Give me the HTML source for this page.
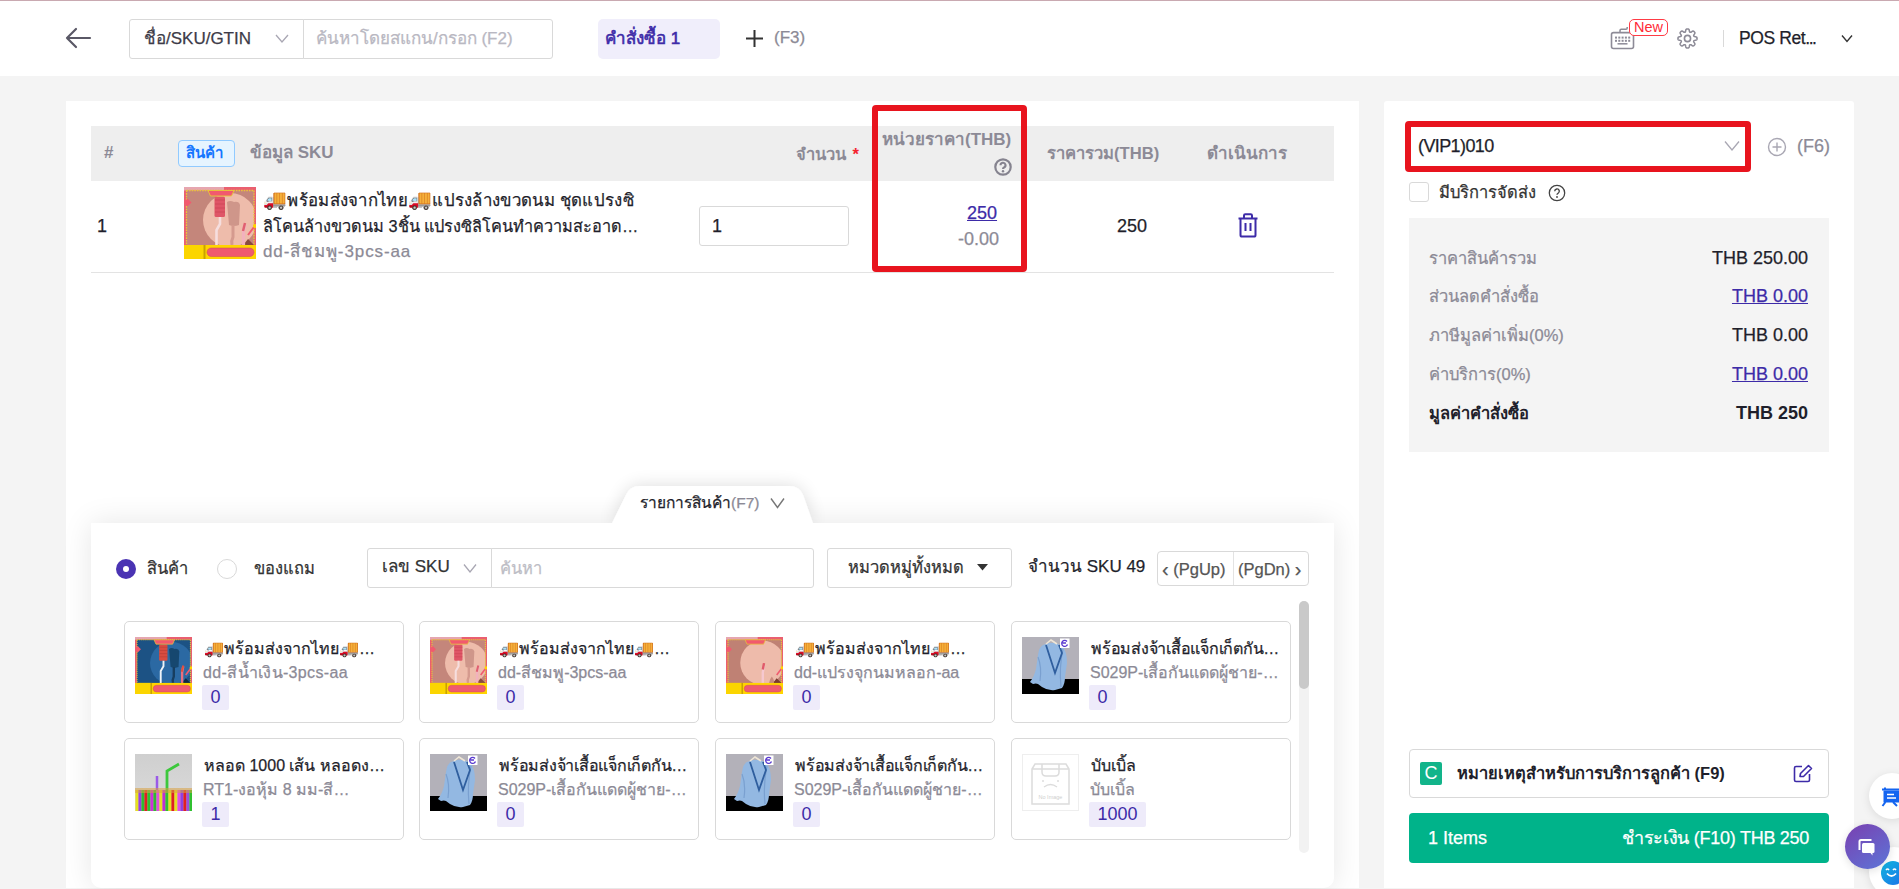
<!DOCTYPE html>
<html><head><meta charset="utf-8">
<style>
*{box-sizing:border-box;margin:0;padding:0}
html,body{width:1899px;height:889px;overflow:hidden;background:#f4f4f4;font-family:"Liberation Sans",sans-serif;color:#1f1f2b}
.a{position:absolute}
.t{position:absolute;white-space:nowrap;line-height:20px;height:20px;-webkit-text-stroke:0.25px currentColor}
.hdr{left:0;top:0;width:1899px;height:76px;background:#fff;border-top:1px solid #c9a9b1}
.card{background:#fff}
.t[style*="bold"]{-webkit-text-stroke:0}
.gray{color:#8c8a96}
.purple{color:#3d2ba8}
.box{border:1px solid #d9d9d9;border-radius:3px;background:#fff}
</style></head><body>

<!-- HEADER -->
<div class="a hdr"></div>
<svg class="a" style="left:64px;top:27px" width="28" height="22" viewBox="0 0 28 22"><path d="M12 2 L3 11 L12 20 M3 11 H26" fill="none" stroke="#5a5866" stroke-width="2.2" stroke-linecap="round" stroke-linejoin="round"/></svg>
<div class="a box" style="left:129px;top:19px;width:175px;height:40px;border-radius:3px 0 0 3px"></div>
<div class="t" style="left:144px;top:29px;font-size:17px;color:#3d3b48">ชื่อ/SKU/GTIN</div>
<svg class="a" style="left:275px;top:34px" width="14" height="9" viewBox="0 0 14 9"><path d="M1 1 L7 8 L13 1" fill="none" stroke="#a9a7b3" stroke-width="1.3"/></svg>
<div class="a box" style="left:303px;top:19px;width:250px;height:40px;border-radius:0 3px 3px 0"></div>
<div class="t" style="left:316px;top:29px;font-size:17px;color:#b9b8c2">ค้นหาโดยสแกน/กรอก (F2)</div>
<div class="a" style="left:598px;top:19px;width:122px;height:40px;background:#f0eefb;border-radius:5px"></div>
<div class="t" style="left:605px;top:29px;font-size:17px;color:#3d2ba8;-webkit-text-stroke:0.6px #3d2ba8">คำสั่งซื้อ 1</div>
<svg class="a" style="left:745px;top:29px" width="19" height="19" viewBox="0 0 19 19"><path d="M9.5 1 V18 M1 9.5 H18" stroke="#333" stroke-width="2"/></svg>
<div class="t" style="left:774px;top:28px;font-size:17px;color:#8c8a96">(F3)</div>

<!-- keyboard icon -->
<svg class="a" style="left:1608px;top:24px" width="30" height="28" viewBox="0 0 30 28"><rect x="3.5" y="8.6" width="22" height="15.9" rx="2" fill="none" stroke="#8d8b97" stroke-width="1.6"/><g fill="#8d8b97"><rect x="7" y="12.6" width="2" height="2"/><rect x="10.3" y="12.6" width="2" height="2"/><rect x="13.6" y="12.6" width="2" height="2"/><rect x="16.9" y="12.6" width="2" height="2"/><rect x="20.2" y="12.6" width="2" height="2"/><rect x="7" y="15.8" width="2" height="2"/><rect x="10.3" y="15.8" width="2" height="2"/><rect x="13.6" y="15.8" width="2" height="2"/><rect x="16.9" y="15.8" width="2" height="2"/><rect x="20.2" y="15.8" width="2" height="2"/></g><path d="M9.5 19.8 H19.5" stroke="#8d8b97" stroke-width="1.5"/><path d="M12 8.6 V6.5 Q12 5.3 13.2 5.3 H18 Q19.2 5.3 19.2 4 V3" fill="none" stroke="#8d8b97" stroke-width="1.5"/></svg>
<div class="a" style="left:1629px;top:19px;width:39px;height:17px;border:1.2px solid #ff3b45;border-radius:5px;background:#fff;color:#ff2a36;font-size:14.5px;line-height:15px;text-align:center">New</div>
<svg class="a" style="left:1676px;top:27px" width="23" height="23" viewBox="0 0 24 24"><path fill="none" stroke="#8d8b97" stroke-width="1.6" stroke-linejoin="round" d="M12.00 2.03 L12.26 2.04 L12.52 2.06 L12.78 2.11 L13.03 2.19 L13.27 2.33 L13.50 2.56 L13.68 2.92 L13.82 3.42 L13.93 3.98 L14.01 4.48 L14.12 4.86 L14.24 5.12 L14.38 5.29 L14.53 5.41 L14.70 5.49 L14.87 5.55 L15.07 5.57 L15.29 5.55 L15.55 5.46 L15.89 5.26 L16.31 4.97 L16.78 4.64 L17.23 4.39 L17.62 4.26 L17.94 4.26 L18.21 4.33 L18.44 4.46 L18.66 4.61 L18.86 4.77 L19.05 4.95 L19.23 5.14 L19.39 5.34 L19.54 5.56 L19.67 5.79 L19.74 6.06 L19.74 6.38 L19.61 6.77 L19.36 7.22 L19.03 7.69 L18.74 8.11 L18.54 8.45 L18.45 8.71 L18.43 8.93 L18.45 9.13 L18.51 9.30 L18.59 9.47 L18.71 9.62 L18.88 9.76 L19.14 9.88 L19.52 9.99 L20.02 10.07 L20.58 10.18 L21.08 10.32 L21.44 10.50 L21.67 10.73 L21.81 10.97 L21.89 11.22 L21.94 11.48 L21.96 11.74 L21.97 12.00 L21.96 12.26 L21.94 12.52 L21.89 12.78 L21.81 13.03 L21.67 13.27 L21.44 13.50 L21.08 13.68 L20.58 13.82 L20.02 13.93 L19.52 14.01 L19.14 14.12 L18.88 14.24 L18.71 14.38 L18.59 14.53 L18.51 14.70 L18.45 14.87 L18.43 15.07 L18.45 15.29 L18.54 15.55 L18.74 15.89 L19.03 16.31 L19.36 16.78 L19.61 17.23 L19.74 17.62 L19.74 17.94 L19.67 18.21 L19.54 18.44 L19.39 18.66 L19.23 18.86 L19.05 19.05 L18.86 19.23 L18.66 19.39 L18.44 19.54 L18.21 19.67 L17.94 19.74 L17.62 19.74 L17.23 19.61 L16.78 19.36 L16.31 19.03 L15.89 18.74 L15.55 18.54 L15.29 18.45 L15.07 18.43 L14.87 18.45 L14.70 18.51 L14.53 18.59 L14.38 18.71 L14.24 18.88 L14.12 19.14 L14.01 19.52 L13.93 20.02 L13.82 20.58 L13.68 21.08 L13.50 21.44 L13.27 21.67 L13.03 21.81 L12.78 21.89 L12.52 21.94 L12.26 21.96 L12.00 21.97 L11.74 21.96 L11.48 21.94 L11.22 21.89 L10.97 21.81 L10.73 21.67 L10.50 21.44 L10.32 21.08 L10.18 20.58 L10.07 20.02 L9.99 19.52 L9.88 19.14 L9.76 18.88 L9.62 18.71 L9.47 18.59 L9.30 18.51 L9.13 18.45 L8.93 18.43 L8.71 18.45 L8.45 18.54 L8.11 18.74 L7.69 19.03 L7.22 19.36 L6.77 19.61 L6.38 19.74 L6.06 19.74 L5.79 19.67 L5.56 19.54 L5.34 19.39 L5.14 19.23 L4.95 19.05 L4.77 18.86 L4.61 18.66 L4.46 18.44 L4.33 18.21 L4.26 17.94 L4.26 17.62 L4.39 17.23 L4.64 16.78 L4.97 16.31 L5.26 15.89 L5.46 15.55 L5.55 15.29 L5.57 15.07 L5.55 14.87 L5.49 14.70 L5.41 14.53 L5.29 14.38 L5.12 14.24 L4.86 14.12 L4.48 14.01 L3.98 13.93 L3.42 13.82 L2.92 13.68 L2.56 13.50 L2.33 13.27 L2.19 13.03 L2.11 12.78 L2.06 12.52 L2.04 12.26 L2.03 12.00 L2.04 11.74 L2.06 11.48 L2.11 11.22 L2.19 10.97 L2.33 10.73 L2.56 10.50 L2.92 10.32 L3.42 10.18 L3.98 10.07 L4.48 9.99 L4.86 9.88 L5.12 9.76 L5.29 9.62 L5.41 9.47 L5.49 9.30 L5.55 9.13 L5.57 8.93 L5.55 8.71 L5.46 8.45 L5.26 8.11 L4.97 7.69 L4.64 7.22 L4.39 6.77 L4.26 6.38 L4.26 6.06 L4.33 5.79 L4.46 5.56 L4.61 5.34 L4.77 5.14 L4.95 4.95 L5.14 4.77 L5.34 4.61 L5.56 4.46 L5.79 4.33 L6.06 4.26 L6.38 4.26 L6.77 4.39 L7.22 4.64 L7.69 4.97 L8.11 5.26 L8.45 5.46 L8.71 5.55 L8.93 5.57 L9.13 5.55 L9.30 5.49 L9.47 5.41 L9.62 5.29 L9.76 5.12 L9.88 4.86 L9.99 4.48 L10.07 3.98 L10.18 3.42 L10.32 2.92 L10.50 2.56 L10.73 2.33 L10.97 2.19 L11.22 2.11 L11.48 2.06 L11.74 2.04Z"/><circle cx="12" cy="12" r="3.2" fill="none" stroke="#8d8b97" stroke-width="1.7"/></svg>
<div class="a" style="left:1723px;top:30px;width:1px;height:17px;background:#d9d9d9"></div>
<div class="t" style="left:1739px;top:28px;font-size:17.5px;color:#1f1f2b;letter-spacing:-0.4px">POS Ret<span style="letter-spacing:-1.5px">...</span></div>
<svg class="a" style="left:1841px;top:34px" width="12" height="9" viewBox="0 0 12 9"><path d="M1 1.5 L6 7.5 L11 1.5" fill="none" stroke="#333" stroke-width="1.4"/></svg>

<!-- LEFT CARD -->
<div class="a card" style="left:66px;top:101px;width:1293px;height:787px"></div>
<div class="a" style="left:91px;top:126px;width:1243px;height:55px;background:#eeeeee"></div>
<div class="t gray" style="left:104px;top:143px;font-size:17px;font-weight:bold">#</div>
<div class="a" style="left:178px;top:140px;width:57px;height:27px;background:#e6f4ff;border:1px solid #91caff;border-radius:4px"></div>
<div class="t" style="left:186px;top:143px;font-size:15px;color:#1677ff;font-weight:bold">สินค้า</div>
<div class="t gray" style="left:250px;top:143px;font-size:17px;font-weight:bold">ข้อมูล SKU</div>
<div class="t gray" style="left:796px;top:144px;font-size:16.5px;font-weight:bold">จำนวน <span style="color:#f5222d;margin-left:2px">*</span></div>
<div class="t gray" style="left:882px;top:130px;font-size:17px;font-weight:bold">หน่วยราคา(THB)</div>
<svg class="a" style="left:994px;top:158px" width="18" height="18" viewBox="0 0 18 18"><circle cx="9" cy="9" r="7.7" fill="none" stroke="#85838f" stroke-width="2.2"/><path d="M6.5 7.3a2.5 2.5 0 1 1 3.5 2.2c-.7.3-1 .8-1 1.6" fill="none" stroke="#85838f" stroke-width="2.1"/><circle cx="9" cy="13.3" r="1.2" fill="#85838f"/></svg>
<div class="t gray" style="left:1047px;top:144px;font-size:16.6px;font-weight:bold">ราคารวม(THB)</div>
<div class="t gray" style="left:1207px;top:144px;font-size:17px;font-weight:bold">ดำเนินการ</div>

<!-- row -->
<div class="t" style="left:97px;top:216px;font-size:18px">1</div>
<div id="img0" class="a" style="left:184px;top:187px;width:72px;height:72px;overflow:hidden"><svg width="72" height="72" viewBox="0 0 72 72"><defs><clipPath id="cr"><rect x="2.5" y="3.5" width="67.5" height="55.5"/></clipPath></defs><rect width="72" height="72" fill="#ea5f70"/><rect x="0" y="0" width="40" height="3.5" fill="#e6a6b0"/><rect x="2.5" y="3.5" width="67.5" height="55.5" fill="#c4867b"/><g clip-path="url(#cr)"><circle cx="46" cy="33" r="27" fill="#eebcab"/><path d="M64 52 L72 60 V60 H58 Z" fill="#8a4a40"/><path d="M43 15 Q46 13 50 15 Q55 14 56 18 L55 38 Q50 40 45 38 Z" fill="#cf968a"/><path d="M49 38 V50 Q47 54 48 58" stroke="#d59a8e" stroke-width="3" fill="none"/><rect x="30.5" y="9.5" width="10.5" height="20.5" rx="1.5" fill="#df5667"/><path d="M31 13 H41 M31 17 H41 M31 21 H41 M31 25 H41" stroke="#c84050" stroke-width=".6"/><path d="M36 30 V37 L32.5 43 V59" stroke="#f6dede" stroke-width="2.6" fill="none"/><path d="M61 37 L59.5 45 V59" stroke="#f2b2bd" stroke-width="3.2" fill="none"/><path d="M61 36 L59 44" stroke="#e06070" stroke-width="2.5"/></g><rect x="2.5" y="3.5" width="67.5" height="55.5" fill="none" stroke="#e8c838" stroke-width="1.3" stroke-dasharray="1.6 1"/><path d="M24 3.5 H50 L47.5 9 H26.5 Z" fill="#f15a6e" stroke="#e8c838" stroke-width=".9"/><path d="M3.5 11.5 L7.5 15.5 L3.5 19.5 L-0.5 15.5 Z" fill="#f15a6e"/><rect x="0" y="58" width="72" height="14" fill="#ffd400"/><rect x="0" y="58" width="19.5" height="14" fill="#fbd500"/><rect x="19.5" y="58" width="2" height="14" fill="#c9a300"/><rect x="23" y="61" width="47" height="8.5" rx="4.2" fill="#f05a6e" stroke="#c94a5a" stroke-width=".5"/><path d="M70 40 L64 48" stroke="#f05a6e" stroke-width="2"/><circle cx="71" cy="39" r="2" fill="#ffd400"/></svg></div><!--/img0-->
<div class="t" style="left:263px;top:190px;font-size:16.8px;letter-spacing:0.3px"><span style="font-size:19px">🚚</span>พร้อมส่งจากไทย<span style="font-size:19px">🚚</span>แปรงล้างขวดนม ชุดแปรงซิ</div>
<div class="t" style="left:263px;top:216px;font-size:16.3px">ลิโคนล้างขวดนม 3ชิ้น แปรงซิลิโคนทำความสะอาด…</div>
<div class="t gray" style="left:263px;top:242px;font-size:17px;letter-spacing:0.9px">dd-สีชมพู-3pcs-aa</div>
<div class="a box" style="left:699px;top:206px;width:150px;height:40px"></div>
<div class="t" style="left:712px;top:216px;font-size:18px">1</div>
<div class="t purple" style="left:967px;top:203px;font-size:18px;text-decoration:underline">250</div>
<div class="t gray" style="left:900px;width:99px;text-align:right;top:229px;font-size:18px">-0.00</div>
<div class="t" style="left:1117px;top:216px;font-size:18px">250</div>
<svg class="a" style="left:1237px;top:213px" width="22" height="25" viewBox="0 0 22 25"><path d="M1.5 5.5 H20.5 M7 5.5 V2.5 Q7 1.2 8.3 1.2 H13.7 Q15 1.2 15 2.5 V5.5 M3.5 5.5 V22 Q3.5 23.6 5 23.6 H17 Q18.5 23.6 18.5 22 V5.5 M8.5 10 V18 M13.5 10 V18" fill="none" stroke="#3d2ba8" stroke-width="2"/></svg>
<div class="a" style="left:91px;top:272px;width:1243px;height:1px;background:#e3e3e3"></div>

<!-- red highlight -->
<div class="a" style="left:872px;top:105px;width:155px;height:167px;border:6px solid #e8141e;border-radius:4px"></div>

<!-- BOTTOM PANEL -->
<div id="panel" class="a" style="left:91px;top:523px;width:1243px;height:365px;background:#fff;box-shadow:0 0 30px rgba(0,0,0,0.10);border-radius:0 0 10px 10px"></div>
<svg class="a" style="left:590px;top:470px" width="245" height="60" viewBox="0 0 245 60"><defs><filter id="sh" x="-20%" y="-50%" width="140%" height="200%"><feGaussianBlur in="SourceAlpha" stdDeviation="9"/><feComponentTransfer><feFuncA type="linear" slope="0.14"/></feComponentTransfer><feMerge><feMergeNode/><feMergeNode in="SourceGraphic"/></feMerge></filter></defs><path d="M22 53 L36 25 Q40 16 50 16 H199 Q209 16 213 25 L223 53 Z" fill="#fff" filter="url(#sh)"/></svg>
<div class="a" style="left:91px;top:523px;width:1243px;height:20px;background:#fff"></div>
<div class="t" style="left:640px;top:493px;font-size:15.5px">รายการสินค้า<span style="color:#8c8a96">(F7)</span></div>
<svg class="a" style="left:770px;top:497px" width="15" height="12" viewBox="0 0 15 12"><path d="M1 1.5 L7.5 10.5 L14 1.5" fill="none" stroke="#777" stroke-width="1.4"/></svg>

<div class="a" style="left:116px;top:559px;width:20px;height:20px;border-radius:50%;background:#4a33b3"></div>
<div class="a" style="left:123px;top:566px;width:6px;height:6px;border-radius:50%;background:#fff"></div>
<div class="t" style="left:147px;top:558px;font-size:16.5px;color:#333">สินค้า</div>
<div class="a" style="left:217px;top:559px;width:20px;height:20px;border-radius:50%;border:1px solid #d9d9d9;background:#fff"></div>
<div class="t" style="left:254px;top:558px;font-size:16.5px;color:#333">ของแถม</div>

<div class="a box" style="left:367px;top:548px;width:125px;height:40px;border-radius:3px 0 0 3px"></div>
<div class="t" style="left:382px;top:557px;font-size:17px;color:#333">เลข SKU</div>
<svg class="a" style="left:463px;top:563px" width="14" height="10" viewBox="0 0 14 10"><path d="M1 1.5 L7 9 L13 1.5" fill="none" stroke="#a9a7b3" stroke-width="1.3"/></svg>
<div class="a box" style="left:491px;top:548px;width:323px;height:40px;border-radius:0 3px 3px 0"></div>
<div class="t" style="left:500px;top:558px;font-size:16.5px;color:#bdbdc5">ค้นหา</div>
<div class="a box" style="left:827px;top:548px;width:185px;height:40px"></div>
<div class="t" style="left:848px;top:557px;font-size:16.5px;color:#333">หมวดหมู่ทั้งหมด</div>
<svg class="a" style="left:977px;top:564px" width="11" height="7" viewBox="0 0 11 7"><path d="M0 0 H11 L5.5 6.5 Z" fill="#333"/></svg>
<div class="t" style="left:1028px;top:557px;font-size:17px;color:#1f1f2b">จำนวน SKU 49</div>
<div class="a box" style="left:1157px;top:551px;width:152px;height:35px;border-radius:4px"></div>
<div class="a" style="left:1233px;top:552px;width:1px;height:33px;background:#e3e3e3"></div>
<div class="t" style="left:1162px;top:558px;font-size:16.5px;color:#555"><span style="font-size:20px;position:relative;top:1px">‹</span> (PgUp)</div>
<div class="t" style="left:1238px;top:558px;font-size:16.5px;color:#555">(PgDn) <span style="font-size:20px;position:relative;top:1px">›</span></div>

<!-- scrollbar -->
<div class="a" style="left:1299px;top:601px;width:10px;height:252px;background:#f2f2f2;border-radius:5px"></div>
<div class="a" style="left:1299px;top:601px;width:10px;height:88px;background:#c9c9c9;border-radius:5px"></div>

<div id="cards"></div>
<div class="a box" style="left:124px;top:621px;width:280px;height:102px;border-radius:5px"></div>
<div class="a" style="left:135px;top:637px;width:57px;height:57px"><svg width="57" height="57" viewBox="0 0 72 72"><defs><clipPath id="c0"><rect x="2.5" y="3.5" width="67.5" height="55.5"/></clipPath></defs><rect width="72" height="72" fill="#ea5f70"/><rect x="0" y="0" width="40" height="3.5" fill="#e6a6b0"/><rect x="2.5" y="3.5" width="67.5" height="55.5" fill="#1c5284"/><g clip-path="url(#c0)"><circle cx="46" cy="33" r="27" fill="#2b69a3"/><path d="M64 52 L72 60 V60 H58 Z" fill="#0e2a44"/><path d="M43 15 Q46 13 50 15 Q55 14 56 18 L55 38 Q50 40 45 38 Z" fill="#16476f"/><path d="M49 38 V50 Q47 54 48 58" stroke="#173e60" stroke-width="3" fill="none"/><rect x="30.5" y="9.5" width="10.5" height="20.5" rx="1.5" fill="#d94c40"/><path d="M31 13 H41 M31 17 H41 M31 21 H41 M31 25 H41" stroke="#b03a30" stroke-width=".6"/><path d="M36 30 V37 L32.5 43 V59" stroke="#eef3f8" stroke-width="2.4" fill="none"/><path d="M61 37 L59.5 45 V59" stroke="#e87080" stroke-width="3" fill="none"/><path d="M61 36 L59 44" stroke="#e05040" stroke-width="2.5"/></g><rect x="2.5" y="3.5" width="67.5" height="55.5" fill="none" stroke="#e8c838" stroke-width="1.3" stroke-dasharray="1.6 1"/><path d="M24 3.5 H50 L47.5 9 H26.5 Z" fill="#f15a6e" stroke="#e8c838" stroke-width=".9"/><path d="M3.5 11.5 L7.5 15.5 L3.5 19.5 L-0.5 15.5 Z" fill="#f15a6e"/><rect x="0" y="58" width="72" height="14" fill="#ffd400"/><rect x="0" y="58" width="19.5" height="14" fill="#fbd500"/><rect x="19.5" y="58" width="2" height="14" fill="#c9a300"/><rect x="23" y="61" width="47" height="8.5" rx="4.2" fill="#f05a6e" stroke="#c94a5a" stroke-width=".5"/><path d="M70 40 L64 48" stroke="#f05a6e" stroke-width="2"/><circle cx="71" cy="39" r="2" fill="#ffd400"/></svg></div>
<div class="t" style="left:204px;top:639px;font-size:16px">🚚พร้อมส่งจากไทย🚚…</div>
<div class="t gray" style="left:203px;top:663px;font-size:16px;letter-spacing:0.35px">dd-สีน้ำเงิน-3pcs-aa</div>
<div class="a" style="left:202px;top:685px;width:27px;height:25px;background:#eeebfa;border-radius:2px;color:#3d2ba8;font-size:18px;line-height:25px;text-align:center">0</div>
<div class="a box" style="left:419px;top:621px;width:280px;height:102px;border-radius:5px"></div>
<div class="a" style="left:430px;top:637px;width:57px;height:57px"><svg width="57" height="57" viewBox="0 0 72 72"><defs><clipPath id="c1"><rect x="2.5" y="3.5" width="67.5" height="55.5"/></clipPath></defs><rect width="72" height="72" fill="#ea5f70"/><rect x="0" y="0" width="40" height="3.5" fill="#e6a6b0"/><rect x="2.5" y="3.5" width="67.5" height="55.5" fill="#c4867b"/><g clip-path="url(#c1)"><circle cx="46" cy="33" r="27" fill="#eebcab"/><path d="M64 52 L72 60 V60 H58 Z" fill="#8a4a40"/><path d="M43 15 Q46 13 50 15 Q55 14 56 18 L55 38 Q50 40 45 38 Z" fill="#cf968a"/><path d="M49 38 V50 Q47 54 48 58" stroke="#d59a8e" stroke-width="3" fill="none"/><rect x="30.5" y="9.5" width="10.5" height="20.5" rx="1.5" fill="#df5667"/><path d="M31 13 H41 M31 17 H41 M31 21 H41 M31 25 H41" stroke="#c84050" stroke-width=".6"/><path d="M36 30 V37 L32.5 43 V59" stroke="#f6dede" stroke-width="2.6" fill="none"/><path d="M61 37 L59.5 45 V59" stroke="#f2b2bd" stroke-width="3.2" fill="none"/><path d="M61 36 L59 44" stroke="#e06070" stroke-width="2.5"/></g><rect x="2.5" y="3.5" width="67.5" height="55.5" fill="none" stroke="#e8c838" stroke-width="1.3" stroke-dasharray="1.6 1"/><path d="M24 3.5 H50 L47.5 9 H26.5 Z" fill="#f15a6e" stroke="#e8c838" stroke-width=".9"/><path d="M3.5 11.5 L7.5 15.5 L3.5 19.5 L-0.5 15.5 Z" fill="#f15a6e"/><rect x="0" y="58" width="72" height="14" fill="#ffd400"/><rect x="0" y="58" width="19.5" height="14" fill="#fbd500"/><rect x="19.5" y="58" width="2" height="14" fill="#c9a300"/><rect x="23" y="61" width="47" height="8.5" rx="4.2" fill="#f05a6e" stroke="#c94a5a" stroke-width=".5"/><path d="M70 40 L64 48" stroke="#f05a6e" stroke-width="2"/><circle cx="71" cy="39" r="2" fill="#ffd400"/></svg></div>
<div class="t" style="left:499px;top:639px;font-size:16px">🚚พร้อมส่งจากไทย🚚…</div>
<div class="t gray" style="left:498px;top:663px;font-size:16px">dd-สีชมพู-3pcs-aa</div>
<div class="a" style="left:497px;top:685px;width:27px;height:25px;background:#eeebfa;border-radius:2px;color:#3d2ba8;font-size:18px;line-height:25px;text-align:center">0</div>
<div class="a box" style="left:715px;top:621px;width:280px;height:102px;border-radius:5px"></div>
<div class="a" style="left:726px;top:637px;width:57px;height:57px"><svg width="57" height="57" viewBox="0 0 72 72"><defs><clipPath id="c2"><rect x="2.5" y="3.5" width="67.5" height="55.5"/></clipPath></defs><rect width="72" height="72" fill="#ea5f70"/><rect x="0" y="0" width="40" height="3.5" fill="#e6a6b0"/><rect x="2.5" y="3.5" width="67.5" height="55.5" fill="#bf8174"/><g clip-path="url(#c2)"><circle cx="46" cy="32.5" r="28" fill="#eebbab"/><path d="M64 52 L72 60 V60 H58 Z" fill="#7a3a30"/><path d="M48 36 L46.5 45 V59" stroke="#f6c8d0" stroke-width="3" fill="none"/><path d="M48 33 L46.5 41" stroke="#e05a6a" stroke-width="3"/><path d="M58 50 Q62 56 60 59 H54 Q55 53 58 50 Z" fill="#c98a7c"/></g><rect x="2.5" y="3.5" width="67.5" height="55.5" fill="none" stroke="#e8c838" stroke-width="1.3" stroke-dasharray="1.6 1"/><path d="M24 3.5 H50 L47.5 9 H26.5 Z" fill="#f15a6e" stroke="#e8c838" stroke-width=".9"/><path d="M3.5 11.5 L7.5 15.5 L3.5 19.5 L-0.5 15.5 Z" fill="#f15a6e"/><rect x="0" y="58" width="72" height="14" fill="#ffd400"/><rect x="0" y="58" width="19.5" height="14" fill="#fbd500"/><rect x="19.5" y="58" width="2" height="14" fill="#c9a300"/><rect x="23" y="61" width="47" height="8.5" rx="4.2" fill="#f05a6e" stroke="#c94a5a" stroke-width=".5"/><path d="M70 40 L64 48" stroke="#f05a6e" stroke-width="2"/><circle cx="71" cy="39" r="2" fill="#ffd400"/></svg></div>
<div class="t" style="left:795px;top:639px;font-size:16px">🚚พร้อมส่งจากไทย🚚…</div>
<div class="t gray" style="left:794px;top:663px;font-size:16px">dd-แปรงจุกนมหลอก-aa</div>
<div class="a" style="left:793px;top:685px;width:27px;height:25px;background:#eeebfa;border-radius:2px;color:#3d2ba8;font-size:18px;line-height:25px;text-align:center">0</div>
<div class="a box" style="left:1011px;top:621px;width:280px;height:102px;border-radius:5px"></div>
<div class="a" style="left:1022px;top:637px;width:57px;height:57px"><svg width="57" height="57" viewBox="0 0 57 57"><rect width="57" height="57" fill="#b3b1b9"/><rect y="42" width="57" height="15" fill="#000"/><path d="M21 8 Q17 10 16 18 L14 32 Q12 40 8 45 L11 47 Q14 46 16 47 L20 50 Q26 54 33 53 L40 51 Q43 47 43 40 L45 26 Q45 14 40 9 L34 6 L27 6 Z" fill="#93b8e2"/><path d="M16 20 Q20 30 18 44 M41 12 Q37 30 39 50" stroke="#7aa0d0" stroke-width="1.2" fill="none"/><path d="M24 8 L33 36 L40 16 L37 8" stroke="#2f5e9e" stroke-width="1.8" fill="none"/><path d="M24 7 L29 3 L35 7" stroke="#efe6d6" stroke-width="1.6" fill="none"/><rect x="38" y="1.5" width="9.5" height="9.5" fill="#fff"/><path d="M45 4.5 A3 3 0 1 0 45.5 7.5 M40.5 6 H44" stroke="#5a3ad0" stroke-width="1.3" fill="none"/></svg></div>
<div class="t" style="left:1091px;top:639px;font-size:16px;letter-spacing:-0.25px">พร้อมส่งจ้าเสื้อแจ็กเก็ตกัน…</div>
<div class="t gray" style="left:1090px;top:663px;font-size:16px">S029P-เสื้อกันแดดผู้ชาย-…</div>
<div class="a" style="left:1089px;top:685px;width:27px;height:25px;background:#eeebfa;border-radius:2px;color:#3d2ba8;font-size:18px;line-height:25px;text-align:center">0</div>
<div class="a box" style="left:124px;top:738px;width:280px;height:102px;border-radius:5px"></div>
<div class="a" style="left:135px;top:754px;width:57px;height:57px"><svg width="57" height="57" viewBox="0 0 57 57"><defs><linearGradient id="sg" x1="0" y1="0" x2="0" y2="1"><stop offset="0" stop-color="#cfcfcf"/><stop offset="1" stop-color="#dcdcdc"/></linearGradient></defs><rect width="57" height="57" fill="url(#sg)"/><path d="M22 22 V36" stroke="#9a5ae8" stroke-width="2.5"/><path d="M32 36 V17 L44 10" stroke="#3cc83c" stroke-width="2.8" fill="none"/><g stroke-width="3.2">
<path d="M2 36 V57" stroke="#e6e020"/><path d="M5 36 V57" stroke="#9a40e0"/><path d="M8 36 V57" stroke="#2ebc30"/><path d="M11 36 V57" stroke="#e02020"/><path d="M14 36 V57" stroke="#30c030"/><path d="M17 36 V57" stroke="#d030d8"/><path d="M20 36 V57" stroke="#30b830"/><path d="M23 36 V57" stroke="#e050e0"/><path d="M26 36 V57" stroke="#e6e020"/><path d="M29 36 V57" stroke="#c030d0"/><path d="M32 36 V57" stroke="#30c030"/><path d="M35 36 V57" stroke="#e6e020"/><path d="M38 36 V57" stroke="#e02020"/><path d="M41 36 V57" stroke="#e6e020"/><path d="M44 36 V57" stroke="#e050e0"/><path d="M47 36 V57" stroke="#9040e0"/><path d="M50 36 V57" stroke="#e02020"/><path d="M53 36 V57" stroke="#9a50e0"/><path d="M56 36 V57" stroke="#30c030"/></g><rect x="0" y="34" width="57" height="5" fill="#d8a040" opacity=".55"/></svg></div>
<div class="t" style="left:204px;top:756px;font-size:16px">หลอด 1000 เส้น หลอดง…</div>
<div class="t gray" style="left:203px;top:780px;font-size:16px">RT1-งอหุ้ม 8 มม-สี…</div>
<div class="a" style="left:202px;top:802px;width:27px;height:25px;background:#eeebfa;border-radius:2px;color:#3d2ba8;font-size:18px;line-height:25px;text-align:center">1</div>
<div class="a box" style="left:419px;top:738px;width:280px;height:102px;border-radius:5px"></div>
<div class="a" style="left:430px;top:754px;width:57px;height:57px"><svg width="57" height="57" viewBox="0 0 57 57"><rect width="57" height="57" fill="#b3b1b9"/><rect y="42" width="57" height="15" fill="#000"/><path d="M21 8 Q17 10 16 18 L14 32 Q12 40 8 45 L11 47 Q14 46 16 47 L20 50 Q26 54 33 53 L40 51 Q43 47 43 40 L45 26 Q45 14 40 9 L34 6 L27 6 Z" fill="#93b8e2"/><path d="M16 20 Q20 30 18 44 M41 12 Q37 30 39 50" stroke="#7aa0d0" stroke-width="1.2" fill="none"/><path d="M24 8 L33 36 L40 16 L37 8" stroke="#2f5e9e" stroke-width="1.8" fill="none"/><path d="M24 7 L29 3 L35 7" stroke="#efe6d6" stroke-width="1.6" fill="none"/><rect x="38" y="1.5" width="9.5" height="9.5" fill="#fff"/><path d="M45 4.5 A3 3 0 1 0 45.5 7.5 M40.5 6 H44" stroke="#5a3ad0" stroke-width="1.3" fill="none"/></svg></div>
<div class="t" style="left:499px;top:756px;font-size:16px;letter-spacing:-0.25px">พร้อมส่งจ้าเสื้อแจ็กเก็ตกัน…</div>
<div class="t gray" style="left:498px;top:780px;font-size:16px">S029P-เสื้อกันแดดผู้ชาย-…</div>
<div class="a" style="left:497px;top:802px;width:27px;height:25px;background:#eeebfa;border-radius:2px;color:#3d2ba8;font-size:18px;line-height:25px;text-align:center">0</div>
<div class="a box" style="left:715px;top:738px;width:280px;height:102px;border-radius:5px"></div>
<div class="a" style="left:726px;top:754px;width:57px;height:57px"><svg width="57" height="57" viewBox="0 0 57 57"><rect width="57" height="57" fill="#b3b1b9"/><rect y="42" width="57" height="15" fill="#000"/><path d="M21 8 Q17 10 16 18 L14 32 Q12 40 8 45 L11 47 Q14 46 16 47 L20 50 Q26 54 33 53 L40 51 Q43 47 43 40 L45 26 Q45 14 40 9 L34 6 L27 6 Z" fill="#93b8e2"/><path d="M16 20 Q20 30 18 44 M41 12 Q37 30 39 50" stroke="#7aa0d0" stroke-width="1.2" fill="none"/><path d="M24 8 L33 36 L40 16 L37 8" stroke="#2f5e9e" stroke-width="1.8" fill="none"/><path d="M24 7 L29 3 L35 7" stroke="#efe6d6" stroke-width="1.6" fill="none"/><rect x="38" y="1.5" width="9.5" height="9.5" fill="#fff"/><path d="M45 4.5 A3 3 0 1 0 45.5 7.5 M40.5 6 H44" stroke="#5a3ad0" stroke-width="1.3" fill="none"/></svg></div>
<div class="t" style="left:795px;top:756px;font-size:16px;letter-spacing:-0.25px">พร้อมส่งจ้าเสื้อแจ็กเก็ตกัน…</div>
<div class="t gray" style="left:794px;top:780px;font-size:16px">S029P-เสื้อกันแดดผู้ชาย-…</div>
<div class="a" style="left:793px;top:802px;width:27px;height:25px;background:#eeebfa;border-radius:2px;color:#3d2ba8;font-size:18px;line-height:25px;text-align:center">0</div>
<div class="a box" style="left:1011px;top:738px;width:280px;height:102px;border-radius:5px"></div>
<div class="a" style="left:1022px;top:754px;width:57px;height:57px"><svg width="57" height="57" viewBox="0 0 57 57"><rect x=".5" y=".5" width="56" height="56" fill="#fff" stroke="#eeeeee"/><path d="M13 10 H44 L47 15 V50 H10 V15 Z M10 15 H47 M20 10 V18 Q20 22 24 22 H33 Q37 22 37 18 V10" fill="none" stroke="#dcdcdc" stroke-width="1.5"/><path d="M22 33 Q28.5 28 35 33" fill="none" stroke="#dcdcdc" stroke-width="1.3"/><circle cx="21" cy="27" r="1" fill="#dcdcdc"/><circle cx="36" cy="27" r="1" fill="#dcdcdc"/><text x="28.5" y="45" font-size="5.5" text-anchor="middle" fill="#cfcfcf" font-family="Liberation Sans">No Image</text></svg></div>
<div class="t" style="left:1091px;top:756px;font-size:16px">บับเบิ้ล</div>
<div class="t gray" style="left:1090px;top:780px;font-size:16px">บับเบิ้ล</div>
<div class="a" style="left:1089px;top:802px;width:57px;height:25px;background:#eeebfa;border-radius:2px;color:#3d2ba8;font-size:18px;line-height:25px;text-align:center">1000</div>
<!--/cards-->

<!-- RIGHT CARD -->
<div class="a card" style="left:1384px;top:101px;width:470px;height:787px;border-radius:3px 3px 0 0"></div>
<div class="a" style="left:1405px;top:121px;width:346px;height:51px;border:6px solid #e8141e;border-radius:4px;background:#fff"></div>
<div class="t" style="left:1418px;top:136px;font-size:18px;color:#1f1f2b;letter-spacing:-0.6px">(VIP1)010</div>
<svg class="a" style="left:1724px;top:140px" width="16" height="11" viewBox="0 0 16 11"><path d="M1 1.5 L8 10 L15 1.5" fill="none" stroke="#a9a7b3" stroke-width="1.3"/></svg>
<svg class="a" style="left:1767px;top:137px" width="20" height="20" viewBox="0 0 20 20"><circle cx="10" cy="10" r="8.5" fill="none" stroke="#a9a7b3" stroke-width="1.4"/><path d="M10 5.5 V14.5 M5.5 10 H14.5" stroke="#a9a7b3" stroke-width="1.4"/></svg>
<div class="t" style="left:1797px;top:136px;font-size:18px;color:#8c8a96">(F6)</div>
<div class="a" style="left:1409px;top:182px;width:20px;height:20px;border:1px solid #d9d9d9;border-radius:3px;background:#fff"></div>
<div class="t" style="left:1439px;top:182px;font-size:16.5px;color:#333">มีบริการจัดส่ง</div>
<svg class="a" style="left:1548px;top:184px" width="18" height="18" viewBox="0 0 18 18"><circle cx="9" cy="9" r="7.7" fill="none" stroke="#444" stroke-width="1.3"/><path d="M6.7 7.2a2.3 2.3 0 1 1 3.3 2.1c-.6.3-1 .8-1 1.5" fill="none" stroke="#444" stroke-width="1.4"/><circle cx="9" cy="13" r=".9" fill="#444"/></svg>

<div class="a" style="left:1409px;top:218px;width:420px;height:234px;background:#f4f4f4"></div>
<div class="t gray" style="left:1429px;top:248px;font-size:16.5px">ราคาสินค้ารวม</div>
<div class="t" style="left:1600px;width:208px;text-align:right;top:248px;font-size:18px">THB 250.00</div>
<div class="t gray" style="left:1429px;top:286px;font-size:16.5px">ส่วนลดคำสั่งซื้อ</div>
<div class="t purple" style="left:1600px;width:208px;text-align:right;top:286px;font-size:18px;text-decoration:underline">THB 0.00</div>
<div class="t gray" style="left:1429px;top:325px;font-size:16.5px">ภาษีมูลค่าเพิ่ม(0%)</div>
<div class="t" style="left:1600px;width:208px;text-align:right;top:325px;font-size:18px">THB 0.00</div>
<div class="t gray" style="left:1429px;top:364px;font-size:16.5px">ค่าบริการ(0%)</div>
<div class="t purple" style="left:1600px;width:208px;text-align:right;top:364px;font-size:18px;text-decoration:underline">THB 0.00</div>
<div class="t" style="left:1429px;top:403px;font-size:16.5px;font-weight:bold">มูลค่าคำสั่งซื้อ</div>
<div class="t" style="left:1600px;width:208px;text-align:right;top:403px;font-size:18px;font-weight:bold">THB 250</div>

<div class="a" style="left:1409px;top:749px;width:420px;height:49px;border:1px solid #d9d9d9;border-radius:4px;background:#fff"></div>
<div class="a" style="left:1420px;top:762px;width:22px;height:23px;background:#12b48a;border-radius:2px;color:#fff;font-size:18px;line-height:23px;text-align:center">C</div>
<div class="t" style="left:1457px;top:763px;font-size:16.5px;font-weight:bold">หมายเหตุสำหรับการบริการลูกค้า (F9)</div>
<svg class="a" style="left:1793px;top:764px" width="20" height="19" viewBox="0 0 20 19"><path d="M9 2.5 H3 Q1.5 2.5 1.5 4 V16 Q1.5 17.5 3 17.5 H15 Q16.5 17.5 16.5 16 V10" fill="none" stroke="#3d2ba8" stroke-width="1.6"/><path d="M7 12.5 L7.5 9.5 L15.5 1.5 L18.5 4.5 L10.5 12.5 Z" fill="none" stroke="#3d2ba8" stroke-width="1.6" stroke-linejoin="round"/></svg>
<div class="a" style="left:1409px;top:813px;width:420px;height:50px;background:#00b38a;border-radius:4px"></div>
<div class="t" style="left:1428px;top:828px;font-size:18px;color:#fff">1 Items</div>
<div class="t" style="left:1580px;width:229px;text-align:right;top:828px;font-size:18px;color:#fff;letter-spacing:-0.3px">ชำระเงิน (F10) THB 250</div>

<!-- floating widgets -->
<div class="a" style="left:1869px;top:773px;width:46px;height:46px;border-radius:50%;background:#fff;box-shadow:0 2px 10px rgba(0,0,0,0.10)"></div>
<svg class="a" style="left:1881px;top:786px" width="18" height="22" viewBox="0 0 18 22"><path d="M1 3.5 H18" stroke="#1464f0" stroke-width="2"/><path d="M4 1.5 V3.5" stroke="#1464f0" stroke-width="2"/><rect x="2.5" y="4.5" width="16" height="12" fill="#1464f0"/><path d="M6 8.5 H13 M6 12 H15" stroke="#fff" stroke-width="1.6"/><path d="M4.5 16 L1.5 20 M12 16 L16 20" stroke="#1464f0" stroke-width="2"/></svg>
<div class="a" style="left:1869px;top:847px;width:50px;height:50px;border-radius:50%;background:#fff;box-shadow:0 2px 10px rgba(0,0,0,0.10)"></div>
<div class="a" style="left:1881px;top:861px;width:24px;height:24px;border-radius:50%;background:linear-gradient(135deg,#12b8e0,#1a6ee8)"></div>
<svg class="a" style="left:1884px;top:866px" width="15" height="14" viewBox="0 0 15 14"><path d="M2 4 Q3.5 2 5 4 M9 4 Q10.5 2 12 4" stroke="#fff" stroke-width="1.5" fill="none"/><path d="M3 7.5 Q7.5 12.5 12 7.5" stroke="#fff" stroke-width="1.8" fill="none"/></svg>
<div class="a" style="left:1845px;top:824px;width:45px;height:45px;border-radius:50%;background:linear-gradient(145deg,#7a3fb0,#5c76d8);box-shadow:0 2px 8px rgba(0,0,0,0.12)"></div>
<svg class="a" style="left:1857px;top:838px" width="22" height="20" viewBox="0 0 22 20"><path d="M2.5 12 V3.5 Q2.5 2 4 2 H14.5" fill="none" stroke="#fff" stroke-width="2"/><rect x="5" y="5" width="12.5" height="10" rx="1.5" fill="#fff"/><path d="M13 14.5 L15.5 17.5 V14.5 Z" fill="#fff"/></svg>

</body></html>
